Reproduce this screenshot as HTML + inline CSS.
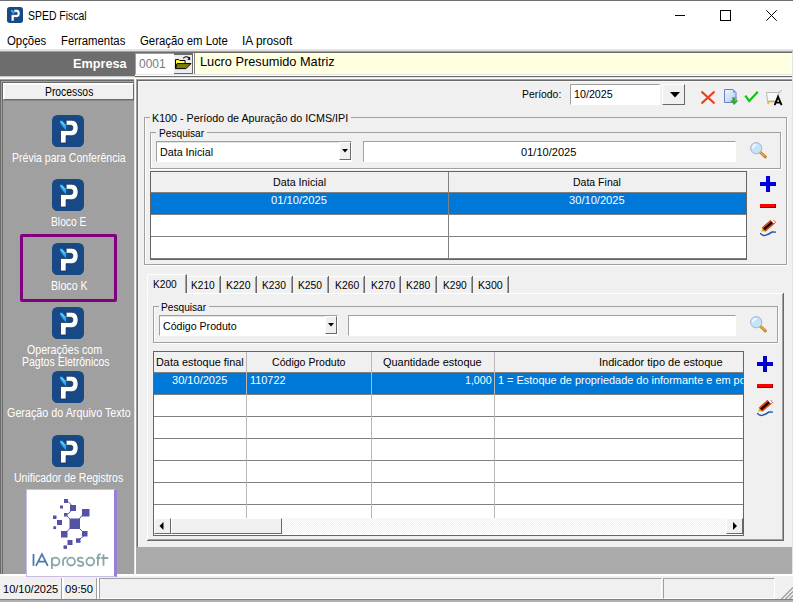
<!DOCTYPE html>
<html><head><meta charset="utf-8">
<style>
*{margin:0;padding:0;box-sizing:border-box}
html,body{width:793px;height:602px;overflow:hidden;background:#fff;font-family:"Liberation Sans", sans-serif;font-size:12px;color:#000;position:relative}
.a{position:absolute}
.t{position:absolute;white-space:nowrap;line-height:0;height:0;transform-origin:0 0}
</style></head><body>
<div class="a" style="left:0px;top:0px;width:793px;height:49px;background:#fff"></div>
<div class="a" style="left:0px;top:0px;width:793px;height:1px;background:#707070"></div>
<svg class="a" style="left:7px;top:7px" width="16" height="16" viewBox="0 0 32 32"><rect x="0" y="0" width="32" height="32" rx="5.5" fill="#164985"/><path d="M8.5 28L8.5 15.4L19.2 15.4Q20.9 15.4 20.9 12.85Q20.9 10.3 19.2 10.3L14.1 10.3L14.1 5.2L19.5 5.2C23.6 5.2 26.1 8.5 26.1 12.95C26.1 17.4 23.6 20.7 19.5 20.7L14.1 20.7L14.1 28Z" fill="#fff" stroke="#0d2f66" stroke-width="0.8"/><path d="M8.4 5.4L10.6 6.6L14.1 10.6L14.1 15.3L10.6 11.4L8.4 8.3Z" fill="#2aaae8"/><path d="M8.4 5.4L10.6 6.6L14.1 10.6L11.5 10.2L8.4 7.2Z" fill="#52c8f6"/></svg>
<div class="a" style="left:675px;top:15px;width:10px;height:1px;background:#000"></div>
<div class="a" style="left:720px;top:10px;width:11px;height:11px;border:1px solid #000"></div>
<svg class="a" style="left:766px;top:10px" width="11" height="11" viewBox="0 0 11 11"><path d="M0.3 0.3L10.7 10.7M10.7 0.3L0.3 10.7" stroke="#000" stroke-width="1"/></svg>
<div class="a" style="left:0px;top:49px;width:793px;height:2px;background:#e3e3e3"></div>
<div class="a" style="left:0px;top:51px;width:793px;height:1px;background:#a0a0a0"></div>
<div class="a" style="left:0px;top:52px;width:793px;height:24px;background:#6d6d6d"></div>
<div class="a" style="left:135px;top:53px;width:39px;height:22px;background:#fff;border-left:1px solid #a0a0a0;border-top:1px solid #a0a0a0"></div>
<div class="a" style="left:174px;top:55px;width:19px;height:19px;background:#ececec;border-right:1px solid #696969;border-bottom:1px solid #696969"></div>
<svg class="a" style="left:164px;top:50px" width="36" height="28" viewBox="164 50 36 28"><path d="M175.5 68.6V59.6h3.4l0.8 0.9h5.4v3" fill="#ffff40" stroke="#000" stroke-width="1"/><path d="M175.5 68.6L177 63.6H191L186 68.6Z" fill="#808000" stroke="#000" stroke-width="1"/><path d="M183.2 58.3Q185.6 55.4 189 57.8" fill="none" stroke="#000" stroke-width="1.1"/><path d="M187.3 59.9L190.3 59.7L190 56.6Z" fill="#000"/></svg>
<div class="a" style="left:193px;top:53px;width:600px;height:22px;background:#ffffe1;border-left:2px solid #fff"></div>
<div class="a" style="left:194px;top:53px;width:1px;height:22px;background:#808080"></div>
<div class="a" style="left:135px;top:74px;width:658px;height:1px;background:#e3e3e3"></div>
<div class="a" style="left:135px;top:75px;width:658px;height:1px;background:#fff"></div>
<div class="a" style="left:0px;top:76px;width:135px;height:1px;background:#c8c8c8"></div>
<div class="a" style="left:135px;top:76px;width:658px;height:1px;background:#6b6b6b"></div>
<div class="a" style="left:0px;top:77px;width:793px;height:1px;background:#f0f0f0"></div>
<div class="a" style="left:135px;top:77px;width:658px;height:1px;background:#e3e3e3"></div>
<div class="a" style="left:0px;top:78px;width:793px;height:1px;background:#fff"></div>
<div class="a" style="left:0px;top:79px;width:136px;height:498px;background:#a0a0a0"></div>
<div class="a" style="left:0px;top:80px;width:1px;height:497px;background:#696969"></div>
<div class="a" style="left:0px;top:80px;width:134px;height:1px;background:#696969"></div>
<div class="a" style="left:2px;top:82px;width:1px;height:495px;background:#696969"></div>
<div class="a" style="left:2px;top:82px;width:132px;height:1px;background:#696969"></div>
<div class="a" style="left:134px;top:79px;width:1px;height:498px;background:#e3e3e3"></div>
<div class="a" style="left:135px;top:79px;width:1px;height:498px;background:#fff"></div>
<div class="a" style="left:3px;top:83px;width:131px;height:17px;background:#f0f0f0;border-top:1px solid #fff;border-left:1px solid #fff;border-right:1px solid #696969;border-bottom:1px solid #696969;box-shadow:inset 1px 1px 0 #fafafa"></div>
<div class="a" style="left:3px;top:100px;width:131px;height:1px;background:#888"></div>
<svg class="a" style="left:52px;top:115px" width="32" height="32" viewBox="0 0 32 32"><rect x="0" y="0" width="32" height="32" rx="5.5" fill="#164985"/><path d="M8.5 28L8.5 15.4L19.2 15.4Q20.9 15.4 20.9 12.85Q20.9 10.3 19.2 10.3L14.1 10.3L14.1 5.2L19.5 5.2C23.6 5.2 26.1 8.5 26.1 12.95C26.1 17.4 23.6 20.7 19.5 20.7L14.1 20.7L14.1 28Z" fill="#fff" stroke="#0d2f66" stroke-width="0.8"/><path d="M8.4 5.4L10.6 6.6L14.1 10.6L14.1 15.3L10.6 11.4L8.4 8.3Z" fill="#2aaae8"/><path d="M8.4 5.4L10.6 6.6L14.1 10.6L11.5 10.2L8.4 7.2Z" fill="#52c8f6"/></svg>
<svg class="a" style="left:52px;top:179px" width="32" height="32" viewBox="0 0 32 32"><rect x="0" y="0" width="32" height="32" rx="5.5" fill="#164985"/><path d="M8.5 28L8.5 15.4L19.2 15.4Q20.9 15.4 20.9 12.85Q20.9 10.3 19.2 10.3L14.1 10.3L14.1 5.2L19.5 5.2C23.6 5.2 26.1 8.5 26.1 12.95C26.1 17.4 23.6 20.7 19.5 20.7L14.1 20.7L14.1 28Z" fill="#fff" stroke="#0d2f66" stroke-width="0.8"/><path d="M8.4 5.4L10.6 6.6L14.1 10.6L14.1 15.3L10.6 11.4L8.4 8.3Z" fill="#2aaae8"/><path d="M8.4 5.4L10.6 6.6L14.1 10.6L11.5 10.2L8.4 7.2Z" fill="#52c8f6"/></svg>
<svg class="a" style="left:52px;top:243px" width="32" height="32" viewBox="0 0 32 32"><rect x="0" y="0" width="32" height="32" rx="5.5" fill="#164985"/><path d="M8.5 28L8.5 15.4L19.2 15.4Q20.9 15.4 20.9 12.85Q20.9 10.3 19.2 10.3L14.1 10.3L14.1 5.2L19.5 5.2C23.6 5.2 26.1 8.5 26.1 12.95C26.1 17.4 23.6 20.7 19.5 20.7L14.1 20.7L14.1 28Z" fill="#fff" stroke="#0d2f66" stroke-width="0.8"/><path d="M8.4 5.4L10.6 6.6L14.1 10.6L14.1 15.3L10.6 11.4L8.4 8.3Z" fill="#2aaae8"/><path d="M8.4 5.4L10.6 6.6L14.1 10.6L11.5 10.2L8.4 7.2Z" fill="#52c8f6"/></svg>
<svg class="a" style="left:52px;top:307px" width="32" height="32" viewBox="0 0 32 32"><rect x="0" y="0" width="32" height="32" rx="5.5" fill="#164985"/><path d="M8.5 28L8.5 15.4L19.2 15.4Q20.9 15.4 20.9 12.85Q20.9 10.3 19.2 10.3L14.1 10.3L14.1 5.2L19.5 5.2C23.6 5.2 26.1 8.5 26.1 12.95C26.1 17.4 23.6 20.7 19.5 20.7L14.1 20.7L14.1 28Z" fill="#fff" stroke="#0d2f66" stroke-width="0.8"/><path d="M8.4 5.4L10.6 6.6L14.1 10.6L14.1 15.3L10.6 11.4L8.4 8.3Z" fill="#2aaae8"/><path d="M8.4 5.4L10.6 6.6L14.1 10.6L11.5 10.2L8.4 7.2Z" fill="#52c8f6"/></svg>
<svg class="a" style="left:52px;top:371px" width="32" height="32" viewBox="0 0 32 32"><rect x="0" y="0" width="32" height="32" rx="5.5" fill="#164985"/><path d="M8.5 28L8.5 15.4L19.2 15.4Q20.9 15.4 20.9 12.85Q20.9 10.3 19.2 10.3L14.1 10.3L14.1 5.2L19.5 5.2C23.6 5.2 26.1 8.5 26.1 12.95C26.1 17.4 23.6 20.7 19.5 20.7L14.1 20.7L14.1 28Z" fill="#fff" stroke="#0d2f66" stroke-width="0.8"/><path d="M8.4 5.4L10.6 6.6L14.1 10.6L14.1 15.3L10.6 11.4L8.4 8.3Z" fill="#2aaae8"/><path d="M8.4 5.4L10.6 6.6L14.1 10.6L11.5 10.2L8.4 7.2Z" fill="#52c8f6"/></svg>
<svg class="a" style="left:52px;top:435px" width="32" height="32" viewBox="0 0 32 32"><rect x="0" y="0" width="32" height="32" rx="5.5" fill="#164985"/><path d="M8.5 28L8.5 15.4L19.2 15.4Q20.9 15.4 20.9 12.85Q20.9 10.3 19.2 10.3L14.1 10.3L14.1 5.2L19.5 5.2C23.6 5.2 26.1 8.5 26.1 12.95C26.1 17.4 23.6 20.7 19.5 20.7L14.1 20.7L14.1 28Z" fill="#fff" stroke="#0d2f66" stroke-width="0.8"/><path d="M8.4 5.4L10.6 6.6L14.1 10.6L14.1 15.3L10.6 11.4L8.4 8.3Z" fill="#2aaae8"/><path d="M8.4 5.4L10.6 6.6L14.1 10.6L11.5 10.2L8.4 7.2Z" fill="#52c8f6"/></svg>
<div class="a" style="left:20px;top:234px;width:97px;height:68px;border:3px solid #800080;border-radius:2px"></div>
<div class="a" style="left:136px;top:79px;width:657px;height:498px;background:#ababab"></div>
<div class="a" style="left:136px;top:79px;width:657px;height:468px;background:#f0f0f0"></div>
<div class="a" style="left:136px;top:79px;width:1px;height:468px;background:#a0a0a0"></div>
<div class="a" style="left:137px;top:80px;width:1px;height:467px;background:#696969"></div>
<div class="a" style="left:137px;top:79px;width:656px;height:1px;background:#a0a0a0"></div>
<div class="a" style="left:137px;top:80px;width:656px;height:1px;background:#696969"></div>
<div class="a" style="left:138px;top:81px;width:655px;height:1px;background:#f8f8f8"></div>
<div class="a" style="left:138px;top:81px;width:1px;height:466px;background:#f8f8f8"></div>
<div class="a" style="left:570px;top:84px;width:90px;height:21px;background:#fff;border-top:1px solid #a0a0a0;border-left:1px solid #a0a0a0;border-bottom:1px solid #fff;border-right:1px solid #fff"></div>
<div class="a" style="left:662px;top:84px;width:23px;height:21px;background:#f0f0f0;border-top:1px solid #fff;border-left:1px solid #fff;border-right:1px solid #696969;border-bottom:1px solid #696969"></div>
<svg class="a" style="left:670px;top:92px" width="10" height="6" viewBox="0 0 10 6"><path d="M0 0h10L5 5.5z" fill="#000"/></svg>
<svg class="a" style="left:700px;top:90px" width="16" height="15" viewBox="0 0 16 15"><path d="M1.5 1.5L14.5 13.5M14.5 1.5L1.5 13.5" stroke="#e8401c" stroke-width="2.2"/></svg>
<svg class="a" style="left:720px;top:85px" width="66" height="23" viewBox="720 85 66 23"><defs><linearGradient id="pg" x1="0" y1="0" x2="1" y2="1"><stop offset="0" stop-color="#f4f8fe"/><stop offset="1" stop-color="#a8ccf0"/></linearGradient></defs><path d="M724.5 89.5h8.5l3 3v10h-11.5z" fill="url(#pg)" stroke="#6a7ec8" stroke-width="1"/><path d="M733 89.5l3 3h-3z" fill="#4aa8e8"/><path d="M732.4 97h3.8v3.5h2l-4 4.5-4-4.5h2.2z" fill="#3fa03f"/><path d="M733.2 97.5h2.2v3.6" stroke="#80d070" stroke-width="0.8" fill="none"/><path d="M745.3 95.6l3.9 5.4 8.6-9.3" stroke="#14c414" stroke-width="2.3" fill="none"/><path d="M766.5 92.5h12.5l-1.8 8.6h-9.6z" fill="#f8f8f8" stroke="#b8b8b8" stroke-width="1"/><path d="M779 92.5l2.6-2.4" stroke="#d8c080" stroke-width="1.2"/><path d="M767.5 101.6h8" stroke="#e0b020" stroke-width="1.3"/><circle cx="768.2" cy="103" r="1.2" fill="#f0c020"/><path d="M774.6 105.2L778 96.6 781.6 105.2M775.9 102.6h4.4" stroke="#000" stroke-width="1.8" fill="none"/></svg>
<div class="a" style="left:144px;top:117px;width:6px;height:1px;background:#a0a0a0"></div>
<div class="a" style="left:351px;top:117px;width:436px;height:1px;background:#a0a0a0"></div>
<div class="a" style="left:144px;top:117px;width:1px;height:148px;background:#a0a0a0"></div>
<div class="a" style="left:786px;top:117px;width:1px;height:148px;background:#a0a0a0"></div>
<div class="a" style="left:144px;top:264px;width:643px;height:1px;background:#a0a0a0"></div>
<div class="a" style="left:145px;top:118px;width:1px;height:146px;background:#fff"></div>
<div class="a" style="left:145px;top:265px;width:643px;height:1px;background:#fff"></div>
<div class="a" style="left:787px;top:117px;width:1px;height:149px;background:#fff"></div>
<div class="a" style="left:150px;top:132px;width:6px;height:1px;background:#a0a0a0"></div>
<div class="a" style="left:207px;top:132px;width:574px;height:1px;background:#a0a0a0"></div>
<div class="a" style="left:150px;top:132px;width:1px;height:37px;background:#a0a0a0"></div>
<div class="a" style="left:780px;top:132px;width:1px;height:37px;background:#a0a0a0"></div>
<div class="a" style="left:150px;top:168px;width:631px;height:1px;background:#a0a0a0"></div>
<div class="a" style="left:151px;top:133px;width:1px;height:35px;background:#fff"></div>
<div class="a" style="left:151px;top:169px;width:631px;height:1px;background:#fff"></div>
<div class="a" style="left:781px;top:132px;width:1px;height:38px;background:#fff"></div>
<div class="a" style="left:156px;top:141px;width:196px;height:21px;background:#fff;border-top:1px solid #a0a0a0;border-left:1px solid #a0a0a0;border-bottom:1px solid #fff;border-right:1px solid #fff"></div>
<div class="a" style="left:157px;top:142px;width:194px;height:1px;background:#e3e3e3"></div>
<div class="a" style="left:339px;top:142px;width:12px;height:18px;background:#f0f0f0;border-top:1px solid #fff;border-left:1px solid #fff;border-right:1px solid #696969;border-bottom:1px solid #696969"></div>
<svg class="a" style="left:342px;top:149px" width="6" height="4" viewBox="0 0 6 4"><path d="M0 0h6L3 3.5z" fill="#000"/></svg>
<div class="a" style="left:363px;top:141px;width:373px;height:21px;background:#fff;border-top:1px solid #a0a0a0;border-left:1px solid #a0a0a0;border-bottom:1px solid #fff;border-right:1px solid #fff"></div>
<svg class="a" style="left:749px;top:141px" width="18" height="18" viewBox="0 0 18 18"><path d="M10.6 10.6L16.3 15.9" stroke="#c87818" stroke-width="2.8" stroke-linecap="round"/><path d="M11 10.9L16 15.5" stroke="#f4a848" stroke-width="1.3"/><circle cx="7.2" cy="7.2" r="5.6" fill="#c4e4fa" stroke="#a4b4d4" stroke-width="1"/><path d="M3.8 7.5A3.6 3.6 0 0 1 7.5 3.8" stroke="#fff" stroke-width="1.6" fill="none" opacity="0.9"/></svg>
<div class="a" style="left:150px;top:171px;width:597px;height:89px;background:#fff;border:1px solid #646464"></div>
<div class="a" style="left:151px;top:172px;width:595px;height:20px;background:#f0f0f0"></div>
<div class="a" style="left:151px;top:192px;width:595px;height:1px;background:#808080"></div>
<div class="a" style="left:151px;top:193px;width:595px;height:21px;background:#0078d7"></div>
<div class="a" style="left:151px;top:214px;width:595px;height:1px;background:#808080"></div>
<div class="a" style="left:151px;top:236px;width:595px;height:1px;background:#808080"></div>
<div class="a" style="left:151px;top:258px;width:595px;height:1px;background:#808080"></div>
<div class="a" style="left:448px;top:172px;width:1px;height:87px;background:#808080"></div>
<div class="a" style="left:760px;top:182px;width:16px;height:4px;background:#0000e0;box-shadow:inset 0 -1px 0 #0000a0"></div>
<div class="a" style="left:766px;top:176px;width:4px;height:16px;background:#0000e0;box-shadow:inset -1px 0 0 #0000a0"></div>
<div class="a" style="left:760px;top:204px;width:16px;height:4px;background:#ff0000;box-shadow:inset -1px -1px 0 #a00000"></div>
<svg class="a" style="left:760px;top:220px" width="17" height="17" viewBox="0 0 17 17"><g transform="translate(1.4 11.6) rotate(-41.3)"><path d="M0 0L3.4 -2.5L3.4 2.5Z" fill="#e8a800"/><rect x="3.4" y="-2.5" width="11.4" height="5" fill="#e84a10" stroke="#b02800" stroke-width="0.6"/><rect x="3.4" y="-1.1" width="10.6" height="2.2" fill="#000"/><rect x="14.4" y="-2.5" width="2.4" height="5" fill="#fff" stroke="#d03010" stroke-width="0.7"/></g><path d="M0.2 13.2Q2.6 16.4 6 15.2T12.2 11.9L16 12.1" stroke="#2050b0" stroke-width="1.4" fill="none"/></svg>
<div class="a" style="left:147px;top:274px;width:40px;height:19px;background:#f0f0f0;border-left:1px solid #fff;border-top:1px solid #fff;border-right:1px solid #696969;box-shadow:inset -1px 0 0 #a0a0a0;border-top-left-radius:2px"></div>
<div class="a" style="left:147px;top:293px;width:40px;height:1px;background:#f0f0f0"></div>
<div class="a" style="left:187px;top:276px;width:33px;height:17px;background:#f0f0f0;border-top:1px solid #fff"></div>
<div class="a" style="left:219px;top:277px;width:1px;height:16px;background:#a0a0a0"></div>
<div class="a" style="left:220px;top:276px;width:1px;height:17px;background:#696969"></div>
<div class="a" style="left:221px;top:276px;width:35px;height:17px;background:#f0f0f0;border-top:1px solid #fff"></div>
<div class="a" style="left:255px;top:277px;width:1px;height:16px;background:#a0a0a0"></div>
<div class="a" style="left:256px;top:276px;width:1px;height:17px;background:#696969"></div>
<div class="a" style="left:257px;top:276px;width:35px;height:17px;background:#f0f0f0;border-top:1px solid #fff"></div>
<div class="a" style="left:291px;top:277px;width:1px;height:16px;background:#a0a0a0"></div>
<div class="a" style="left:292px;top:276px;width:1px;height:17px;background:#696969"></div>
<div class="a" style="left:293px;top:276px;width:35px;height:17px;background:#f0f0f0;border-top:1px solid #fff"></div>
<div class="a" style="left:327px;top:277px;width:1px;height:16px;background:#a0a0a0"></div>
<div class="a" style="left:328px;top:276px;width:1px;height:17px;background:#696969"></div>
<div class="a" style="left:329px;top:276px;width:35px;height:17px;background:#f0f0f0;border-top:1px solid #fff"></div>
<div class="a" style="left:363px;top:277px;width:1px;height:16px;background:#a0a0a0"></div>
<div class="a" style="left:364px;top:276px;width:1px;height:17px;background:#696969"></div>
<div class="a" style="left:365px;top:276px;width:35px;height:17px;background:#f0f0f0;border-top:1px solid #fff"></div>
<div class="a" style="left:399px;top:277px;width:1px;height:16px;background:#a0a0a0"></div>
<div class="a" style="left:400px;top:276px;width:1px;height:17px;background:#696969"></div>
<div class="a" style="left:401px;top:276px;width:35px;height:17px;background:#f0f0f0;border-top:1px solid #fff"></div>
<div class="a" style="left:435px;top:277px;width:1px;height:16px;background:#a0a0a0"></div>
<div class="a" style="left:436px;top:276px;width:1px;height:17px;background:#696969"></div>
<div class="a" style="left:437px;top:276px;width:35px;height:17px;background:#f0f0f0;border-top:1px solid #fff"></div>
<div class="a" style="left:471px;top:277px;width:1px;height:16px;background:#a0a0a0"></div>
<div class="a" style="left:472px;top:276px;width:1px;height:17px;background:#696969"></div>
<div class="a" style="left:473px;top:276px;width:35px;height:17px;background:#f0f0f0;border-top:1px solid #fff"></div>
<div class="a" style="left:507px;top:277px;width:1px;height:16px;background:#a0a0a0"></div>
<div class="a" style="left:508px;top:276px;width:1px;height:17px;background:#696969"></div>
<div class="a" style="left:187px;top:293px;width:597px;height:1px;background:#fff"></div>
<div class="a" style="left:147px;top:294px;width:1px;height:246px;background:#fff"></div>
<div class="a" style="left:783px;top:293px;width:1px;height:248px;background:#696969"></div>
<div class="a" style="left:782px;top:294px;width:1px;height:246px;background:#a0a0a0"></div>
<div class="a" style="left:147px;top:540px;width:637px;height:1px;background:#696969"></div>
<div class="a" style="left:148px;top:539px;width:635px;height:1px;background:#a0a0a0"></div>
<div class="a" style="left:153px;top:306px;width:6px;height:1px;background:#a0a0a0"></div>
<div class="a" style="left:209px;top:306px;width:569px;height:1px;background:#a0a0a0"></div>
<div class="a" style="left:153px;top:306px;width:1px;height:37px;background:#a0a0a0"></div>
<div class="a" style="left:777px;top:306px;width:1px;height:37px;background:#a0a0a0"></div>
<div class="a" style="left:153px;top:342px;width:625px;height:1px;background:#a0a0a0"></div>
<div class="a" style="left:154px;top:307px;width:1px;height:35px;background:#fff"></div>
<div class="a" style="left:154px;top:343px;width:625px;height:1px;background:#fff"></div>
<div class="a" style="left:778px;top:306px;width:1px;height:38px;background:#fff"></div>
<div class="a" style="left:159px;top:315px;width:179px;height:21px;background:#fff;border-top:1px solid #a0a0a0;border-left:1px solid #a0a0a0;border-bottom:1px solid #fff;border-right:1px solid #fff"></div>
<div class="a" style="left:160px;top:316px;width:177px;height:1px;background:#e3e3e3"></div>
<div class="a" style="left:325px;top:316px;width:12px;height:18px;background:#f0f0f0;border-top:1px solid #fff;border-left:1px solid #fff;border-right:1px solid #696969;border-bottom:1px solid #696969"></div>
<svg class="a" style="left:328px;top:323px" width="6" height="4" viewBox="0 0 6 4"><path d="M0 0h6L3 3.5z" fill="#000"/></svg>
<div class="a" style="left:348px;top:315px;width:388px;height:21px;background:#fff;border-top:1px solid #a0a0a0;border-left:1px solid #a0a0a0;border-bottom:1px solid #fff;border-right:1px solid #fff"></div>
<svg class="a" style="left:749px;top:315px" width="18" height="18" viewBox="0 0 18 18"><path d="M10.6 10.6L16.3 15.9" stroke="#c87818" stroke-width="2.8" stroke-linecap="round"/><path d="M11 10.9L16 15.5" stroke="#f4a848" stroke-width="1.3"/><circle cx="7.2" cy="7.2" r="5.6" fill="#c4e4fa" stroke="#a4b4d4" stroke-width="1"/><path d="M3.8 7.5A3.6 3.6 0 0 1 7.5 3.8" stroke="#fff" stroke-width="1.6" fill="none" opacity="0.9"/></svg>
<div class="a" style="left:153px;top:351px;width:591px;height:185px;background:#fff;border:1px solid #646464"></div>
<div class="a" style="left:154px;top:352px;width:589px;height:20px;background:#f0f0f0"></div>
<div class="a" style="left:154px;top:372px;width:589px;height:1px;background:#808080"></div>
<div class="a" style="left:154px;top:373px;width:589px;height:21px;background:#0078d7"></div>
<div class="a" style="left:154px;top:394px;width:589px;height:1px;background:#808080"></div>
<div class="a" style="left:154px;top:416px;width:589px;height:1px;background:#808080"></div>
<div class="a" style="left:154px;top:438px;width:589px;height:1px;background:#808080"></div>
<div class="a" style="left:154px;top:460px;width:589px;height:1px;background:#808080"></div>
<div class="a" style="left:154px;top:482px;width:589px;height:1px;background:#808080"></div>
<div class="a" style="left:154px;top:504px;width:589px;height:1px;background:#808080"></div>
<div class="a" style="left:246px;top:352px;width:1px;height:166px;background:#b8b8b8"></div>
<div class="a" style="left:371px;top:352px;width:1px;height:166px;background:#b8b8b8"></div>
<div class="a" style="left:494px;top:352px;width:1px;height:166px;background:#b8b8b8"></div>
<div class="a" style="left:154px;top:518px;width:589px;height:16px;background:repeating-conic-gradient(#f0f0f0 0 25%, #fff 0 50%) 0 0/2px 2px"></div>
<div class="a" style="left:154px;top:518px;width:17px;height:16px;background:#f0f0f0;border-top:1px solid #fff;border-left:1px solid #fff;border-right:1px solid #696969;border-bottom:1px solid #696969"></div>
<svg class="a" style="left:159px;top:522px" width="6" height="8" viewBox="0 0 6 8"><path d="M4.5 0v8L0.5 4z" fill="#000"/></svg>
<div class="a" style="left:171px;top:518px;width:111px;height:16px;background:#f0f0f0;border-top:1px solid #fff;border-left:1px solid #fff;border-right:1px solid #696969;border-bottom:1px solid #696969"></div>
<div class="a" style="left:726px;top:518px;width:17px;height:16px;background:#f0f0f0;border-top:1px solid #fff;border-left:1px solid #fff;border-right:1px solid #696969;border-bottom:1px solid #696969"></div>
<svg class="a" style="left:732px;top:522px" width="6" height="8" viewBox="0 0 6 8"><path d="M1 0v8L5 4z" fill="#000"/></svg>
<div class="a" style="left:757px;top:362px;width:16px;height:4px;background:#0000e0;box-shadow:inset 0 -1px 0 #0000a0"></div>
<div class="a" style="left:763px;top:356px;width:4px;height:16px;background:#0000e0;box-shadow:inset -1px 0 0 #0000a0"></div>
<div class="a" style="left:757px;top:384px;width:16px;height:4px;background:#ff0000;box-shadow:inset -1px -1px 0 #a00000"></div>
<svg class="a" style="left:757px;top:400px" width="17" height="17" viewBox="0 0 17 17"><g transform="translate(1.4 11.6) rotate(-41.3)"><path d="M0 0L3.4 -2.5L3.4 2.5Z" fill="#e8a800"/><rect x="3.4" y="-2.5" width="11.4" height="5" fill="#e84a10" stroke="#b02800" stroke-width="0.6"/><rect x="3.4" y="-1.1" width="10.6" height="2.2" fill="#000"/><rect x="14.4" y="-2.5" width="2.4" height="5" fill="#fff" stroke="#d03010" stroke-width="0.7"/></g><path d="M0.2 13.2Q2.6 16.4 6 15.2T12.2 11.9L16 12.1" stroke="#2050b0" stroke-width="1.4" fill="none"/></svg>
<div class="a" style="left:0px;top:574px;width:793px;height:2px;background:#fff"></div>
<div class="a" style="left:0px;top:576px;width:793px;height:26px;background:#f0f0f0"></div>
<div class="a" style="left:61px;top:578px;width:1px;height:21px;background:#a0a0a0"></div>
<div class="a" style="left:62px;top:578px;width:2px;height:21px;background:#fff"></div>
<div class="a" style="left:96px;top:578px;width:1px;height:21px;background:#a0a0a0"></div>
<div class="a" style="left:97px;top:578px;width:2px;height:21px;background:#fff"></div>
<div class="a" style="left:99px;top:578px;width:563px;height:21px;border-top:1px solid #a0a0a0;border-left:1px solid #a0a0a0;border-right:1px solid #fff;border-bottom:1px solid #fff"></div>
<div class="a" style="left:663px;top:578px;width:112px;height:21px;border-top:1px solid #a0a0a0;border-left:1px solid #a0a0a0;border-right:1px solid #fff;border-bottom:1px solid #fff"></div>
<svg class="a" style="left:780px;top:586px" width="13" height="13" viewBox="0 0 13 13"><path d="M13 1.5L1.5 13M13 5.5L5.5 13M13 9.5L9.5 13" stroke="#a0a0a0" stroke-width="1.4"/></svg>
<div class="a" style="left:0px;top:599px;width:793px;height:1px;background:#808080"></div>
<div class="a" style="left:0px;top:600px;width:793px;height:2px;background:#b0b0b0"></div>
<div class="a" style="left:26px;top:489px;width:91px;height:88px;background:#fff;border:1px solid #c9bde6;border-right:3px solid #9b7fd4"></div>
<svg class="a" style="left:26px;top:489px" width="91" height="88" viewBox="26 489 91 88">
<g fill="#5552a6">
<rect x="69.5" y="518.5" width="10.5" height="10.5"/>
<rect x="82" y="509" width="7.5" height="7.5"/>
<rect x="61" y="531" width="6.5" height="6.5"/>
<rect x="82" y="531" width="5.5" height="5.5"/>
<rect x="70" y="505" width="6" height="6"/>
<rect x="64" y="499" width="4" height="4"/>
<rect x="60" y="505.5" width="3" height="3"/>
<rect x="64" y="513" width="3.5" height="3.5"/>
<rect x="57" y="520" width="5" height="5"/>
<rect x="53" y="515.5" width="3.5" height="3.5"/>
<rect x="53.3" y="526.3" width="2.8" height="2.8"/>
<rect x="67.5" y="540" width="5" height="5"/>
<rect x="76" y="538.3" width="4.5" height="4.5"/>
<rect x="63.5" y="545.4" width="3.5" height="3.5"/>
</g>
<g stroke="#5552a6" stroke-width="0.9" fill="none">
<path d="M75 524L85 512M75 524L64 534M75 524L85 534M75 524L66 515M85 535L78.5 540"/>
<path d="M66 501q6 2 6 7M72 508q-1 5-6 7"/>
</g>
<g fill="none" stroke-width="1.8">
<path d="M33.5 554V565.8" stroke="#4d7aa8"/>
<path d="M36 565.8L41.9 554.2L47.8 565.8M38.2 561.6H45.6" stroke="#4d7aa8"/>
<g stroke="#8ba6a9">
<path d="M51.9 557.5V569"/><circle cx="55.6" cy="561.6" r="3.9"/>
<path d="M63 565.8V561.5Q63 557.6 66.8 557.6"/>
<circle cx="71.1" cy="561.6" r="3.9"/>
<path d="M83 558.6Q82 557.6 80.2 557.6Q77.8 557.6 77.8 559.5Q77.8 561.3 80.5 561.6Q83.4 562 83.4 563.9Q83.4 565.8 80.5 565.8Q78.5 565.8 77.5 564.6"/>
<circle cx="90.3" cy="561.6" r="3.9"/>
<path d="M97.9 565.8V557Q97.9 554.2 100.8 554.2M96.4 558H100.4"/>
<path d="M103.5 554.2V565.8M101.2 558H108.2"/>
</g></g>
</svg>
<div class="a" style="left:792px;top:52px;width:1px;height:522px;background:#e3e3e3"></div>
<div class="t" style="left:28.40px;top:15.84px;font-size:12px;color:#000;font-weight:normal;transform:scaleX(0.8698);">SPED Fiscal</div>
<div class="t" style="left:6.80px;top:40.84px;font-size:12px;color:#000;font-weight:normal;transform:scaleX(0.9479);">Opções</div>
<div class="t" style="left:60.50px;top:40.84px;font-size:12px;color:#000;font-weight:normal;transform:scaleX(0.9453);">Ferramentas</div>
<div class="t" style="left:139.50px;top:40.84px;font-size:12px;color:#000;font-weight:normal;transform:scaleX(0.9469);">Geração em Lote</div>
<div class="t" style="left:241.81px;top:40.84px;font-size:12px;color:#000;font-weight:normal;transform:scaleX(0.9917);">IA prosoft</div>
<div class="t" style="left:73.20px;top:64.00px;font-size:13px;color:#fff;font-weight:bold;transform:scaleX(0.9768);">Empresa</div>
<div class="t" style="left:138.60px;top:63.50px;font-size:13px;color:#727a8c;font-weight:normal;transform:scaleX(0.9202);">0001</div>
<div class="t" style="left:199.72px;top:62.30px;font-size:13px;color:#000;font-weight:normal;transform:scaleX(0.9811);">Lucro Presumido Matriz</div>
<div class="t" style="left:44.70px;top:91.64px;font-size:12px;color:#000;font-weight:normal;transform:scaleX(0.8622);">Processos</div>
<div class="t" style="left:11.50px;top:157.94px;font-size:12px;color:#fff;font-weight:normal;transform:scaleX(0.8780);">Prévia para Conferência</div>
<div class="t" style="left:50.80px;top:221.54px;font-size:12px;color:#fff;font-weight:normal;transform:scaleX(0.8561);">Bloco E</div>
<div class="t" style="left:50.60px;top:285.54px;font-size:12px;color:#fff;font-weight:normal;transform:scaleX(0.8851);">Bloco K</div>
<div class="t" style="left:27.40px;top:349.84px;font-size:12px;color:#fff;font-weight:normal;transform:scaleX(0.8854);">Operações com</div>
<div class="t" style="left:21.50px;top:362.24px;font-size:12px;color:#fff;font-weight:normal;transform:scaleX(0.8755);">Pagtos Eletrônicos</div>
<div class="t" style="left:6.70px;top:413.44px;font-size:12px;color:#fff;font-weight:normal;transform:scaleX(0.8974);">Geração do Arquivo Texto</div>
<div class="t" style="left:13.80px;top:477.74px;font-size:12px;color:#fff;font-weight:normal;transform:scaleX(0.8755);">Unificador de Registros</div>
<div class="t" style="left:521.90px;top:93.72px;font-size:11.5px;color:#000;font-weight:normal;transform:scaleX(0.9035);">Período:</div>
<div class="t" style="left:574.00px;top:93.72px;font-size:11.5px;color:#000;font-weight:normal;transform:scaleX(0.9326);">10/2025</div>
<div class="t" style="left:152.40px;top:118.02px;font-size:11.5px;color:#000;font-weight:normal;transform:scaleX(0.9328);">K100 - Período de Apuração do ICMS/IPI</div>
<div class="t" style="left:158.70px;top:133.02px;font-size:11.5px;color:#000;font-weight:normal;transform:scaleX(0.8829);">Pesquisar</div>
<div class="t" style="left:159.50px;top:151.62px;font-size:11.5px;color:#000;font-weight:normal;transform:scaleX(0.9320);">Data Inicial</div>
<div class="t" style="left:521.00px;top:151.62px;font-size:11.5px;color:#000;font-weight:normal;transform:scaleX(0.9622);">01/10/2025</div>
<div class="t" style="left:272.60px;top:182.02px;font-size:11.5px;color:#000;font-weight:normal;transform:scaleX(0.9320);">Data Inicial</div>
<div class="t" style="left:572.60px;top:182.02px;font-size:11.5px;color:#000;font-weight:normal;transform:scaleX(0.9140);">Data Final</div>
<div class="t" style="left:271.10px;top:199.82px;font-size:11.5px;color:#fff;font-weight:normal;transform:scaleX(0.9710);">01/10/2025</div>
<div class="t" style="left:569.30px;top:199.82px;font-size:11.5px;color:#fff;font-weight:normal;transform:scaleX(0.9675);">30/10/2025</div>
<div class="t" style="left:152.50px;top:284.02px;font-size:11.5px;color:#000;font-weight:normal;transform:scaleX(0.8805);">K200</div>
<div class="t" style="left:190.70px;top:285.02px;font-size:11.5px;color:#000;font-weight:normal;transform:scaleX(0.8805);">K210</div>
<div class="t" style="left:226.10px;top:285.02px;font-size:11.5px;color:#000;font-weight:normal;transform:scaleX(0.9145);">K220</div>
<div class="t" style="left:262.40px;top:285.02px;font-size:11.5px;color:#000;font-weight:normal;transform:scaleX(0.8918);">K230</div>
<div class="t" style="left:298.30px;top:285.02px;font-size:11.5px;color:#000;font-weight:normal;transform:scaleX(0.8956);">K250</div>
<div class="t" style="left:334.50px;top:285.02px;font-size:11.5px;color:#000;font-weight:normal;transform:scaleX(0.8994);">K260</div>
<div class="t" style="left:370.50px;top:285.02px;font-size:11.5px;color:#000;font-weight:normal;transform:scaleX(0.8994);">K270</div>
<div class="t" style="left:406.40px;top:285.02px;font-size:11.5px;color:#000;font-weight:normal;transform:scaleX(0.8994);">K280</div>
<div class="t" style="left:442.70px;top:285.02px;font-size:11.5px;color:#000;font-weight:normal;transform:scaleX(0.8805);">K290</div>
<div class="t" style="left:478.00px;top:285.02px;font-size:11.5px;color:#000;font-weight:normal;transform:scaleX(0.9183);">K300</div>
<div class="t" style="left:161.30px;top:307.02px;font-size:11.5px;color:#000;font-weight:normal;transform:scaleX(0.8829);">Pesquisar</div>
<div class="t" style="left:162.70px;top:325.92px;font-size:11.5px;color:#000;font-weight:normal;transform:scaleX(0.9218);">Código Produto</div>
<div class="t" style="left:155.70px;top:361.62px;font-size:11.5px;color:#000;font-weight:normal;transform:scaleX(0.9463);">Data estoque final</div>
<div class="t" style="left:271.80px;top:361.62px;font-size:11.5px;color:#000;font-weight:normal;transform:scaleX(0.9193);">Código Produto</div>
<div class="t" style="left:383.30px;top:361.62px;font-size:11.5px;color:#000;font-weight:normal;transform:scaleX(0.9526);">Quantidade estoque</div>
<div class="t" style="left:598.74px;top:361.62px;font-size:11.5px;color:#000;font-weight:normal;transform:scaleX(0.9565);">Indicador tipo de estoque</div>
<div class="t" style="left:172.30px;top:380.02px;font-size:11.5px;color:#fff;font-weight:normal;transform:scaleX(0.9605);">30/10/2025</div>
<div class="t" style="left:249.80px;top:380.02px;font-size:11.5px;color:#fff;font-weight:normal;transform:scaleX(0.9454);">110722</div>
<div class="t" style="left:464.60px;top:380.02px;font-size:11.5px;color:#fff;font-weight:normal;transform:scaleX(0.9231);">1,000</div>
<div class="t" style="left:497.60px;top:380.02px;font-size:11.5px;color:#fff;font-weight:normal;transform:scaleX(0.9511);clip-path:polygon(-3px -30px,258.03px -30px,258.03px 30px,-3px 30px);">1 = Estoque de propriedade do informante e em po</div>
<div class="t" style="left:2.70px;top:589.02px;font-size:11.5px;color:#000;font-weight:normal;transform:scaleX(0.9587);">10/10/2025</div>
<div class="t" style="left:65.40px;top:589.02px;font-size:11.5px;color:#000;font-weight:normal;transform:scaleX(0.9760);">09:50</div>
</body></html>
